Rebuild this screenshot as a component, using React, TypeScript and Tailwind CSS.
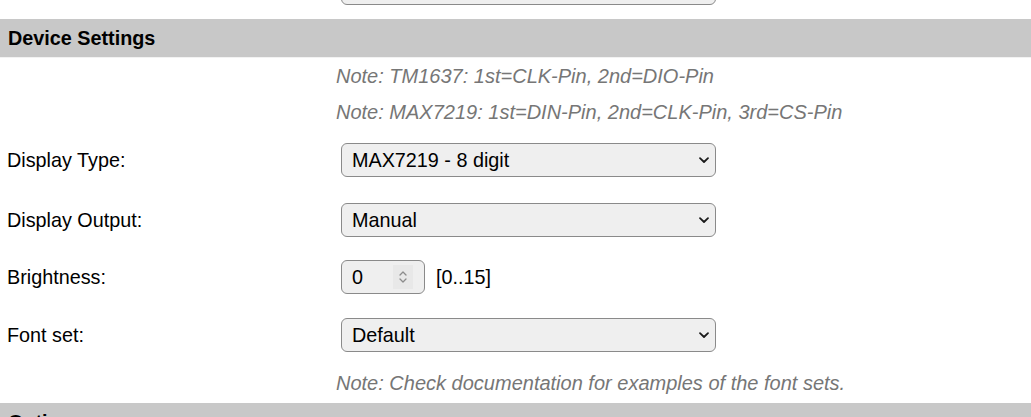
import React from "react";

const Chevron: React.FC = () => (
  <svg
    className="pointer-events-none absolute right-[6px] top-1/2 -translate-y-1/2"
    width="12"
    height="8"
    viewBox="0 0 12 8"
    fill="none"
  >
    <path d="M2 2.2 L6 6 L10 2.2" stroke="#1a1a1a" strokeWidth="1.8" strokeLinecap="round" strokeLinejoin="round" />
  </svg>
);

const Select: React.FC<{ value: string }> = ({ value }) => (
  <div className="relative w-[375px] h-[34px]">
    <select
      defaultValue={value}
      className="appearance-none w-full h-full rounded-[6px] border border-[#8a8a8a] bg-[#efefef] pl-[10px] pr-8 text-[19.8px] text-black outline-none font-['Liberation_Sans',Arial,sans-serif]"
    >
      <option>{value}</option>
    </select>
    <Chevron />
  </div>
);

const NumberBox: React.FC<{ value: number }> = ({ value }) => (
  <div className="relative w-[84px] h-[34px] rounded-[6px] border border-[#8a8a8a] bg-[#efefef] flex items-center pl-[10px]">
    <span>{value}</span>
    <div className="absolute right-[11px] top-[4px] bottom-[4px] w-[20px] bg-[#e8e8e8] flex items-center justify-center">
      <svg width="10" height="16" viewBox="0 0 10 16" fill="none">
        <path d="M2 6 L5 3 L8 6" stroke="#8c8c8c" strokeWidth="1.3" strokeLinecap="round" strokeLinejoin="round" />
        <path d="M2 10 L5 13 L8 10" stroke="#8c8c8c" strokeWidth="1.3" strokeLinecap="round" strokeLinejoin="round" />
      </svg>
    </div>
  </div>
);

const Row: React.FC<{ label: string; className?: string; children: React.ReactNode }> = ({ label, className, children }) => (
  <div className={`flex items-center h-[34px] ${className ?? ""}`}>
    <div className="w-[341px] pl-[7px]">{label}</div>
    {children}
  </div>
);

const Note: React.FC<{ text: string; className?: string }> = ({ text, className }) => (
  <div className={`pl-[336px] italic text-[20px] text-[#767676] flex items-center ${className ?? ""}`}>{text}</div>
);

export default function App() {
  return (
    <div className="w-[1031px] h-[417px] overflow-hidden bg-white text-black text-[19.8px] leading-[23px] font-['Liberation_Sans',Arial,sans-serif]">
      <div className="pl-[341px] -mt-[29px]">
        <Select value="" />
      </div>

      <div className="mt-[14px] h-[38px] bg-[#c8c8c8] pl-[8px] flex items-center font-bold">Device Settings</div>
      <div className="h-[1px] bg-[#f2f2f2]" />

      <Note className="h-[36px]" text="Note: TM1637: 1st=CLK-Pin, 2nd=DIO-Pin" />
      <Note className="h-[37px]" text="Note: MAX7219: 1st=DIN-Pin, 2nd=CLK-Pin, 3rd=CS-Pin" />

      <Row label="Display Type:" className="mt-[12px]">
        <Select value="MAX7219 - 8 digit" />
      </Row>
      <Row label="Display Output:" className="mt-[26px]">
        <Select value="Manual" />
      </Row>
      <Row label="Brightness:" className="mt-[23px]">
        <NumberBox value={0} />
        <span className="ml-[11px]">[0..15]</span>
      </Row>
      <Row label="Font set:" className="mt-[24px]">
        <Select value="Default" />
      </Row>

      <Note className="mt-[20px] h-[23px]" text="Note: Check documentation for examples of the font sets." />

      <div className="mt-[8px] h-[38px] bg-[#c8c8c8] pl-[8px] flex items-center font-bold">Options</div>
    </div>
  );
}
